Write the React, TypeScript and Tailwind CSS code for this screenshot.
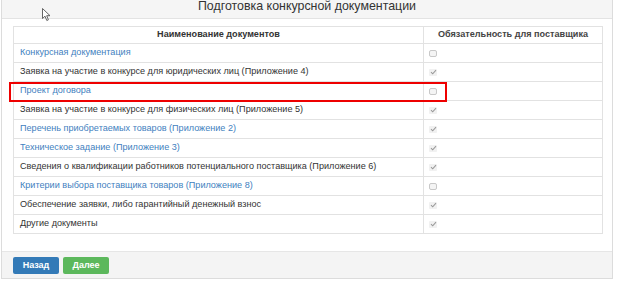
import React from 'react';

type DocRow = {
  name: string;
  link: boolean;
  required: boolean;
};

const rows: DocRow[] = [
  { name: 'Конкурсная документация', link: true, required: false },
  { name: 'Заявка на участие в конкурсе для юридических лиц (Приложение 4)', link: false, required: true },
  { name: 'Проект договора', link: true, required: false },
  { name: 'Заявка на участие в конкурсе для физических лиц (Приложение 5)', link: false, required: true },
  { name: 'Перечень приобретаемых товаров (Приложение 2)', link: true, required: true },
  { name: 'Техническое задание (Приложение 3)', link: true, required: true },
  { name: 'Сведения о квалификации работников потенциального поставщика (Приложение 6)', link: false, required: true },
  { name: 'Критерии выбора поставщика товаров (Приложение 8)', link: true, required: false },
  { name: 'Обеспечение заявки, либо гарантийный денежный взнос', link: false, required: true },
  { name: 'Другие документы', link: false, required: true },
];

const CheckBox: React.FC<{ checked: boolean }> = ({ checked }) => {
  if (checked) {
    return (
      <span className="flex items-center justify-center w-[8px] h-[7px] rounded-[1px] bg-[#f1f1f1]">
        <svg width="7" height="6" viewBox="0 0 7 6">
          <path d="M1 3.2 L2.7 4.8 L6 1.2" fill="none" stroke="#9a9a9a" strokeWidth="1.1" />
        </svg>
      </span>
    );
  }
  return <span className="block w-[8px] h-[7px] rounded-[2px] border border-[#c8c8c8] bg-[#f4f4f4]" />;
};

const Cursor = () => (
  <svg className="absolute left-[42px] top-[8px]" width="10" height="14" viewBox="0 0 10 14">
    <path
      d="M0.5 0.5 L0.5 10.5 L3 8.2 L4.8 12.5 L6.4 11.8 L4.7 7.7 L8 7.7 Z"
      fill="#fff"
      stroke="#555"
      strokeWidth="0.9"
      strokeLinejoin="round"
    />
  </svg>
);

export default function App() {
  return (
    <div className="relative w-[619px] h-[281px] bg-white overflow-hidden text-[#333] font-['Liberation_Sans',Arial,sans-serif]">
      <div className="ml-[1px] w-[612px] border border-t-0 border-[#dcdcdc]">
        <div className="h-[19px] bg-[#f5f5f5] border-b border-[#e3e3e3] flex justify-center">
          <span className="text-[12.4px] leading-[12px] text-[#333]">
            Подготовка конкурсной документации
          </span>
        </div>

        <div className="pt-[7px] pl-[11px] pr-[9px] pb-[17px]">
          <table className="w-[590px] border-collapse border border-[#e2e2e2] text-[9.1px]">
            <thead>
              <tr className="h-[17px]">
                <th className="border border-[#e2e2e2] font-bold text-center text-[#333]">
                  Наименование документов
                </th>
                <th className="w-[179px] border border-[#e2e2e2] font-semibold text-center text-[#444]">
                  Обязательность для поставщика
                </th>
              </tr>
            </thead>
            <tbody>
              {rows.map((r, i) => (
                <tr key={i} className="h-[19px]">
                  <td
                    className={`border border-[#e2e2e2] pl-[6px] ${
                      r.link ? 'text-[#3f7fc0]' : 'text-[#333]'
                    }`}
                  >
                    {r.name}
                  </td>
                  <td className="border border-[#e2e2e2] pl-[5px]">
                    <CheckBox checked={r.required} />
                  </td>
                </tr>
              ))}
            </tbody>
          </table>
        </div>

        <div className="h-[27px] bg-[#f4f4f4] border-t border-[#e6e6e6] pl-[11px] pt-[5px] flex gap-[4px]">
          <button className="w-[46px] h-[17px] rounded-[2px] bg-[#337ab7] text-white text-[9px] font-bold">
            Назад
          </button>
          <button className="w-[46px] h-[17px] rounded-[2px] bg-[#5cb85c] text-white text-[9px] font-bold">
            Далее
          </button>
        </div>
      </div>

      <div className="absolute left-[9px] top-[82px] w-[438px] h-[20px] border-2 border-[#ee0000]" />
      <Cursor />
    </div>
  );
}
